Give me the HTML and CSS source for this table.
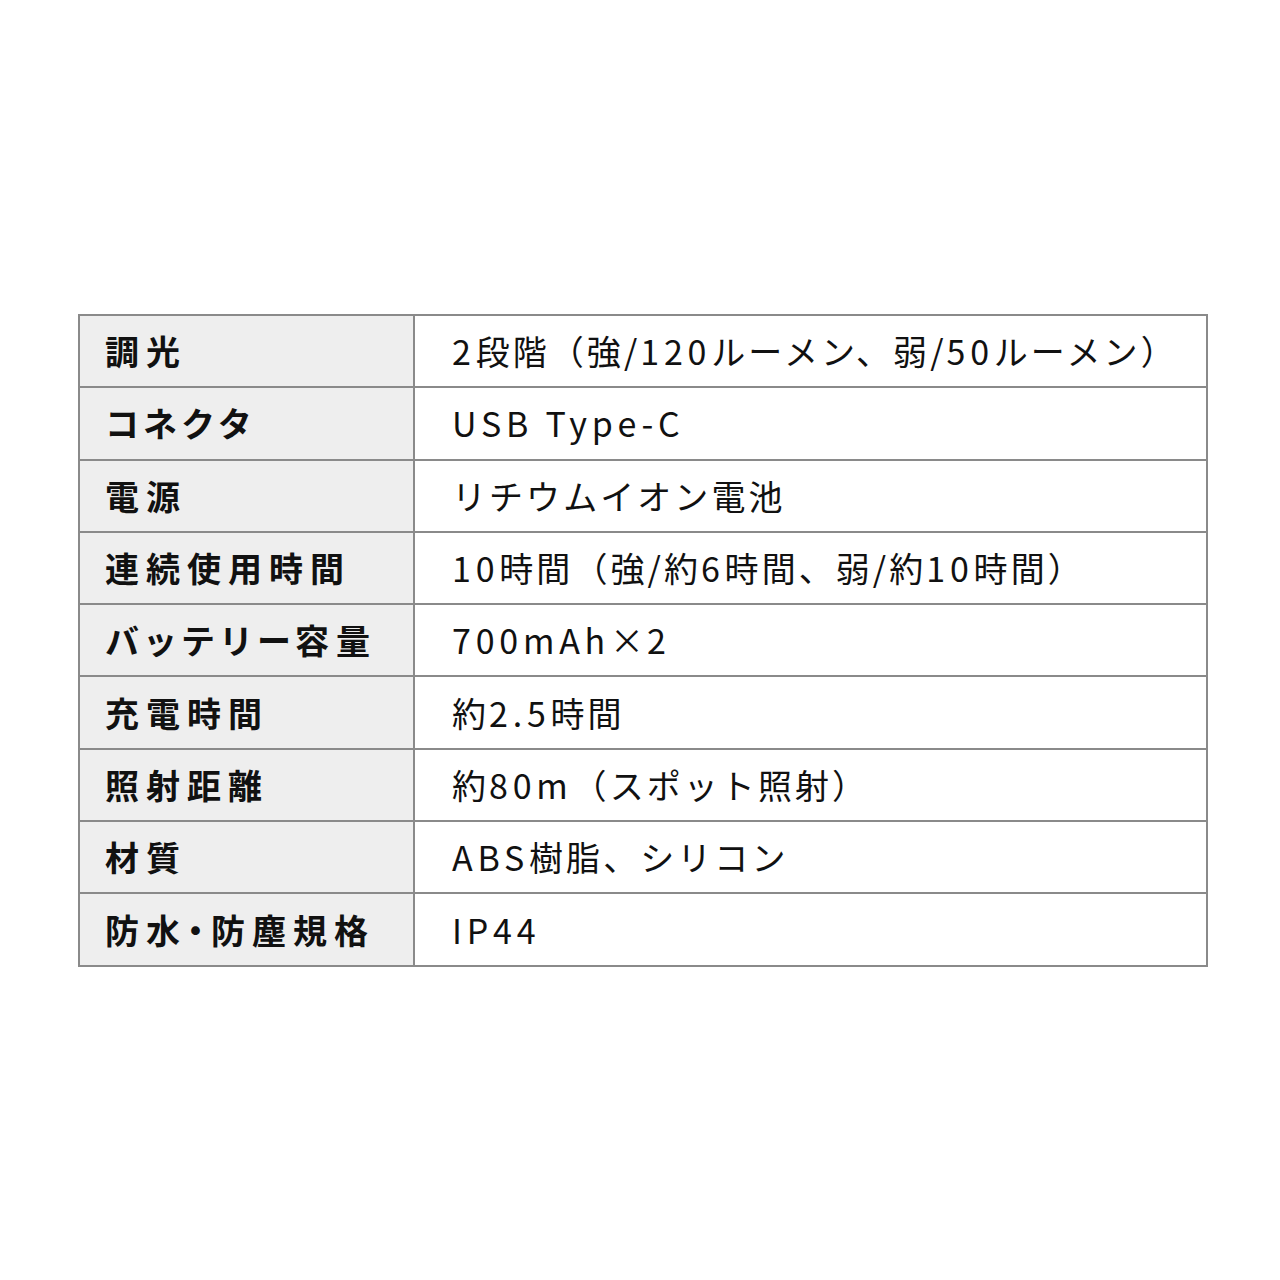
FILE: index.html
```html
<!DOCTYPE html>
<html lang="ja">
<head>
<meta charset="utf-8">
<link rel="stylesheet" href="styles.css">
</head>
<body>
<div class="page">
  <table class="spec">
    <tr><th>調光</th><td><span class="en">2</span>段階（強/<span class="en">120</span>ルーメン、弱/<span class="en">50</span>ルーメン）</td></tr>
    <tr><th><span class="kana">コネクタ</span></th><td><span class="en">USB Type-C</span></td></tr>
    <tr><th>電源</th><td>リチウムイオン電池</td></tr>
    <tr><th>連続使用時間</th><td><span class="en">10</span>時間（強/約<span class="en">6</span>時間、弱/約<span class="en">10</span>時間）</td></tr>
    <tr><th><span class="kana">バッテリー</span>容量</th><td><span class="en">700mAh</span>×<span class="en">2</span></td></tr>
    <tr><th>充電時間</th><td>約<span class="en">2.5</span>時間</td></tr>
    <tr><th>照射距離</th><td>約<span class="en">80m</span>（スポット照射）</td></tr>
    <tr><th>材質</th><td><span class="en">ABS</span>樹脂、シリコン</td></tr>
    <tr><th>防水<span class="dot">・</span>防塵規格</th><td><span class="en">IP44</span></td></tr>
  </table>
</div>
</body>
</html>
```
FILE: styles.css
```css
html, body {
  margin: 0;
  padding: 0;
  background: #ffffff;
}
.page {
  width: 1280px;
  height: 1280px;
  box-sizing: border-box;
  padding-top: 314px;
  padding-left: 78px;
  font-family: "Noto Sans CJK JP", "Noto Sans", sans-serif;
  color: #111111;
}
.spec {
  border-collapse: collapse;
  width: 1130px;
  table-layout: fixed;
}
.spec tr {
  height: 72.3px;
}
.spec th, .spec td {
  border: 2px solid #8a8a8a;
  padding: 0;
  font-size: 34px;
  line-height: 1;
  vertical-align: middle;
  text-align: left;
  white-space: nowrap;
}
.spec th {
  width: 335px;
  box-sizing: border-box;
  background: #eeeeee;
  font-weight: 700;
  letter-spacing: 7px;
  padding-left: 25px;
}
.spec th .kana {
  letter-spacing: 4px;
}
.spec th .dot {
  font-feature-settings: "palt";
  letter-spacing: 7px;
}
.spec td {
  font-weight: 400;
  letter-spacing: 0.09em;
  padding-left: 37px;
}
.spec td .en {
  letter-spacing: 0.14em;
}
```
